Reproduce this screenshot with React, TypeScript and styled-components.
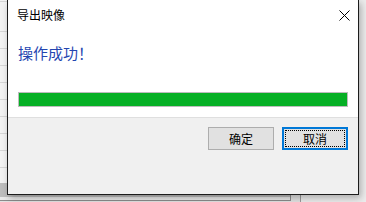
import React from "react";
import styled, { createGlobalStyle } from "styled-components";

const Global = createGlobalStyle`
  html, body { margin: 0; padding: 0; }
  body {
    width: 366px;
    height: 202px;
    overflow: hidden;
    background: #e6e6e6;
    font-family: "Noto Sans CJK SC", "Microsoft YaHei", sans-serif;
  }
`;

const Desktop = styled.div`
  position: relative;
  width: 366px;
  height: 202px;
  overflow: hidden;
  background: linear-gradient(to right, #e2e2e2 0, #e2e2e2 300px, #9a9a9a 300px, #9a9a9a 301px, #ececec 301px);
`;

const BehindWindow = styled.div`
  position: absolute;
  left: 0;
  top: 0;
  width: 290px;
  height: 200px;
  border-right: 1px solid #8c8c8c;
  border-bottom: 1px solid #8c8c8c;
  background:
    linear-gradient(to bottom, transparent 0, transparent 183px, #bdbdbd 183px, #bdbdbd 197px, #e9e9e9 197px),
    repeating-linear-gradient(to bottom, #f2f2f2 0, #f2f2f2 16px, #d6d6d6 16px, #d6d6d6 17px);
  background-position: 0 0, 0 15px;
  background-repeat: no-repeat, repeat;
`;

const Dialog = styled.div`
  position: absolute;
  left: 7px;
  top: 0;
  width: 350px;
  height: 194px;
  border: 1px solid #1c1c1c;
  border-top: none;
  display: flex;
  flex-direction: column;
  background: #ffffff;
  box-shadow: 2px 3px 7px rgba(0, 0, 0, 0.28);
`;

const TitleBar = styled.div`
  height: 30px;
  display: flex;
  align-items: center;
  justify-content: space-between;
  padding-left: 9px;
`;

const Title = styled.span`
  font-size: 12px;
  color: #000;
  line-height: 16px;
`;

const CloseButton = styled.div`
  width: 28px;
  height: 30px;
  display: flex;
  align-items: center;
  justify-content: center;
`;

const Body = styled.div`
  display: flex;
  flex-direction: column;
  padding: 13px 10px 10px 10px;
  background: #fff;
`;

const Instruction = styled.div`
  height: 20px;
  line-height: 20px;
  font-size: 15px;
  color: #2445b0;
  padding-left: 0;
`;

const Progress = styled.div`
  margin-top: 29px;
  height: 13px;
  border: 1px solid #bcbcbc;
  background: #e6e6e6;
  display: flex;
`;

const ProgressFill = styled.div`
  background: #06b025;
  height: 100%;
`;

const Footer = styled.div`
  flex: 1;
  border-top: 1px solid #dfdfdf;
  background: #f0f0f0;
  display: flex;
  justify-content: flex-end;
  align-items: flex-start;
  gap: 8px;
  padding: 9px 10px 0 0;
`;

const Button = styled.div<{ $focused?: boolean }>`
  position: relative;
  box-sizing: border-box;
  width: 66px;
  height: 23px;
  display: flex;
  align-items: center;
  justify-content: center;
  font-size: 12px;
  color: #000;
  background: #e1e1e1;
  border: ${(p) => (p.$focused ? "2px solid #0078d7" : "1px solid #adadad")};
  ${(p) =>
    p.$focused
      ? `&::after {
          content: "";
          position: absolute;
          inset: 1px;
          border: 1px dotted #000;
        }`
      : ""}
`;

export default function App() {
  const progress = 100;
  return (
    <>
      <Global />
      <Desktop>
        <BehindWindow />
        <Dialog>
          <TitleBar>
            <Title>导出映像</Title>
            <CloseButton>
              <svg width="11" height="11" viewBox="0 0 11 11">
                <path d="M0.5 0.5 L10.5 10.5 M10.5 0.5 L0.5 10.5" stroke="#000" strokeWidth="1" fill="none" />
              </svg>
            </CloseButton>
          </TitleBar>
          <Body>
            <Instruction>操作成功！</Instruction>
            <Progress>
              <ProgressFill style={{ width: `${progress}%` }} />
            </Progress>
          </Body>
          <Footer>
            <Button>确定</Button>
            <Button $focused>取消</Button>
          </Footer>
        </Dialog>
      </Desktop>
    </>
  );
}
